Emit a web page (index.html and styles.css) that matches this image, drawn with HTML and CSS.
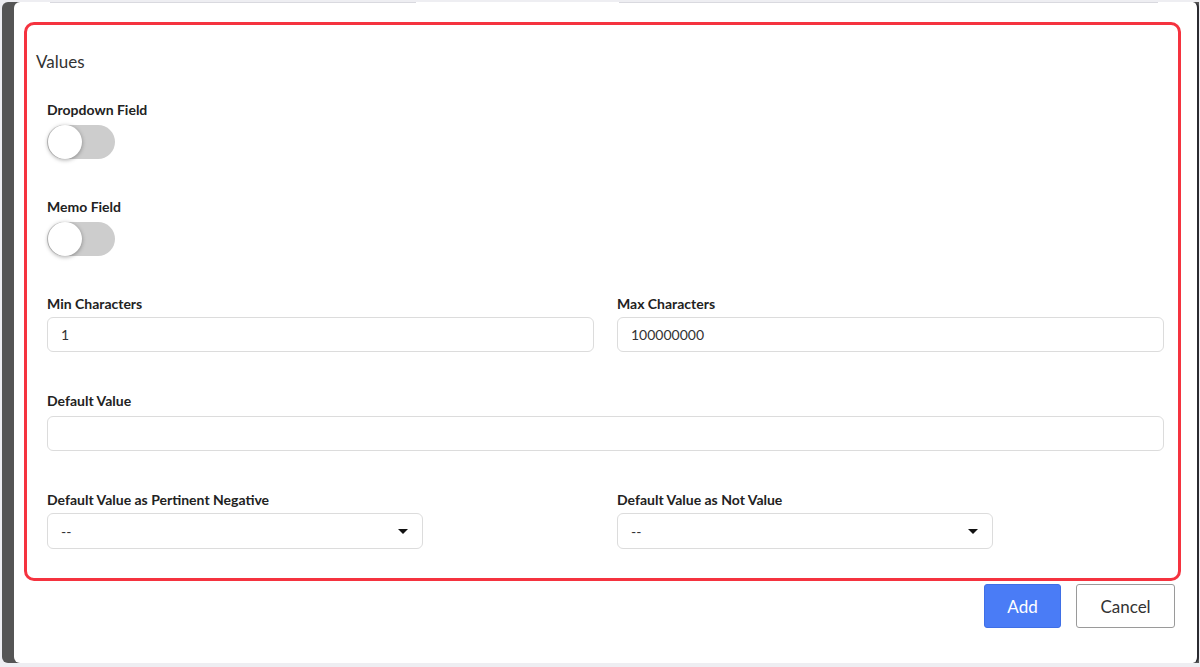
FILE: index.html
```html
<!DOCTYPE html>
<html lang="en">
<head>
  <meta charset="UTF-8">
  <meta name="viewport" content="width=device-width, initial-scale=1.0">
  <title>Add Field</title>
  <link rel="stylesheet" href="styles.css">
</head>
<body>

  <div class="frame">
    <div class="modal">
      <div class="scrolled-edge">
        <span class="edge-left"></span>
        <span class="edge-right"></span>
      </div>

      <div class="section">
        <h2 class="section-title">Values</h2>

        <div class="fields">
          <div class="row toggle-row">
            <div class="field">
              <label class="field-label">Dropdown Field</label>
              <span class="toggle"><span class="knob"></span></span>
            </div>
          </div>

          <div class="row toggle-row">
            <div class="field">
              <label class="field-label">Memo Field</label>
              <span class="toggle"><span class="knob"></span></span>
            </div>
          </div>

          <div class="row">
            <div class="field">
              <label class="field-label" for="minChars">Min Characters</label>
              <input class="text-input" type="text" id="minChars" value="1">
            </div>
            <div class="field">
              <label class="field-label" for="maxChars">Max Characters</label>
              <input class="text-input" type="text" id="maxChars" value="100000000">
            </div>
          </div>

          <div class="row single">
            <div class="field">
              <label class="field-label" for="defaultValue">Default Value</label>
              <input class="text-input" type="text" id="defaultValue" value="">
            </div>
          </div>

          <div class="row last">
            <div class="field">
              <label class="field-label">Default Value as Pertinent Negative</label>
              <div class="select">
                <span>--</span>
                <span class="caret"></span>
              </div>
            </div>
            <div class="field">
              <label class="field-label">Default Value as Not Value</label>
              <div class="select">
                <span>--</span>
                <span class="caret"></span>
              </div>
            </div>
          </div>
        </div>
      </div>

      <div class="actions">
        <button class="btn btn-primary" type="button">Add</button>
        <button class="btn btn-outline" type="button">Cancel</button>
      </div>
    </div>
  </div>

</body>
</html>
```

FILE: styles.css
```css
body {
  margin: 0;
  background-color: #eeeef2;
  font-family: Lato, "Open Sans", Arial, sans-serif;
  color: #222;
}
.frame {
  margin: 2px 1px 0 2px;
  height: 661px;
  background-color: #555;
  border-radius: 6px 0 0 6px;
  padding-left: 12px;
  display: flex;
}
.modal {
  flex: 1;
  background-color: #fff;
  border-radius: 6px;
  border-right: 2px solid #2a2a30;
  padding: 0 16px 0 10px;
}
.scrolled-edge {
  display: flex;
  height: 1px;
  padding-left: 26px;
}
.edge-left, .edge-right {
  height: 1px;
  background-color: #d9d9df;
}
.edge-left {
  width: 366px;
}
.edge-right {
  width: 539px;
  margin-left: 203px;
}
.section {
  margin-top: 19px;
  border: 3px solid #f5333f;
  border-radius: 10px;
  padding: 27px 14px 29px 9px;
}
.section-title {
  margin: 0 0 29px;
  font-size: 17px;
  line-height: 20px;
  font-weight: normal;
  color: #333;
}
.fields {
  padding-left: 11px;
}
.row {
  display: grid;
  grid-template-columns: 1fr 1fr;
  column-gap: 23px;
  margin-bottom: 40px;
}
.row.toggle-row {
  margin-bottom: 39px;
}
.row.single {
  grid-template-columns: 1fr;
  margin-bottom: 40px;
}
.row.single .field-label {
  margin-bottom: 7px;
}
.row.last {
  margin-bottom: 0;
}
.field {
  display: flex;
  flex-direction: column;
}
.field-label {
  font-size: 14px;
  line-height: 17px;
  font-weight: bold;
  color: #222;
  margin-bottom: 5px;
}
.toggle {
  position: relative;
  display: block;
  width: 68px;
  height: 34px;
  margin-top: 2px;
  border-radius: 17px;
  background-color: #cdcdcd;
}
.knob {
  position: absolute;
  left: 1px;
  top: 0;
  width: 34px;
  height: 34px;
  border-radius: 50%;
  background-color: #fff;
  box-shadow: 0 1px 4px rgba(0, 0, 0, 0.35);
}
.text-input {
  height: 35px;
  box-sizing: border-box;
  border: 1px solid #dcdcdc;
  border-radius: 6px;
  padding: 0 13px;
  font-family: Lato, "Open Sans", Arial, sans-serif;
  font-size: 14px;
  color: #333;
  outline: none;
}
.select {
  width: 376px;
  height: 36px;
  box-sizing: border-box;
  border: 1px solid #dcdcdc;
  border-radius: 6px;
  padding: 0 14px 0 13px;
  display: flex;
  align-items: center;
  justify-content: space-between;
  font-size: 14px;
  color: #333;
}
.caret {
  width: 0;
  height: 0;
  border-left: 5px solid transparent;
  border-right: 5px solid transparent;
  border-top: 5px solid #111;
}
.actions {
  display: flex;
  justify-content: flex-end;
  gap: 15px;
  margin-top: 3px;
  padding-right: 6px;
}
.btn {
  height: 44px;
  border-radius: 3px;
  font-family: Lato, "Open Sans", Arial, sans-serif;
  font-size: 17px;
  cursor: pointer;
}
.btn-primary {
  width: 77px;
  background-color: #4a7cf6;
  border: 1px solid #3f6fe6;
  color: #fff;
}
.btn-outline {
  width: 99px;
  background-color: #fff;
  border: 1px solid #9a9a9a;
  color: #333;
}
```
